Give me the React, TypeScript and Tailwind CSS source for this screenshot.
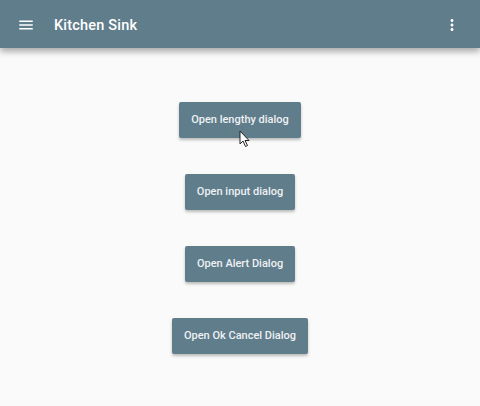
import { MdMenu, MdMoreVert } from "react-icons/md";

const dialogs = [
  "Open lengthy dialog",
  "Open input dialog",
  "Open Alert Dialog",
  "Open Ok Cancel Dialog",
];

export default function App() {
  return (
    <div className="relative h-[406px] w-[480px] overflow-hidden bg-[#fafafa] font-['Roboto',sans-serif]">
      {/* Toolbar */}
      <header className="relative z-10 flex h-12 items-center bg-[#607d8b] pl-[17px] pr-[19px] pt-[2px] text-white shadow-[0_4px_6px_rgba(0,0,0,0.3)]">
        <MdMenu size={18} />
        <h1 className="ml-[19px] mt-[2px] text-[14.5px] font-medium tracking-[0.2px]">Kitchen Sink</h1>
        <div className="flex-1" />
        <MdMoreVert size={18} />
      </header>

      {/* Buttons */}
      <main className="flex flex-col items-center gap-9 pt-[54px]">
        {dialogs.map((label) => (
          <button
            key={label}
            className="h-9 rounded-[2px] bg-[#607d8b] px-3 pt-px text-[11px] font-medium text-[#eef1f3] shadow-[0_2px_3px_rgba(0,0,0,0.25)]"
          >
            {label}
          </button>
        ))}
      </main>

      {/* Mouse cursor */}
      <svg
        className="absolute left-[239px] top-[130px]"
        width="12"
        height="18"
        viewBox="0 0 12 18"
      >
        <path d="M1 1 L1 14 L4 11 L6.5 16.5 L8.5 15.5 L6 10.5 L10 10.5 Z" fill="#fff" stroke="#222" strokeWidth="1" />
      </svg>
    </div>
  );
}
